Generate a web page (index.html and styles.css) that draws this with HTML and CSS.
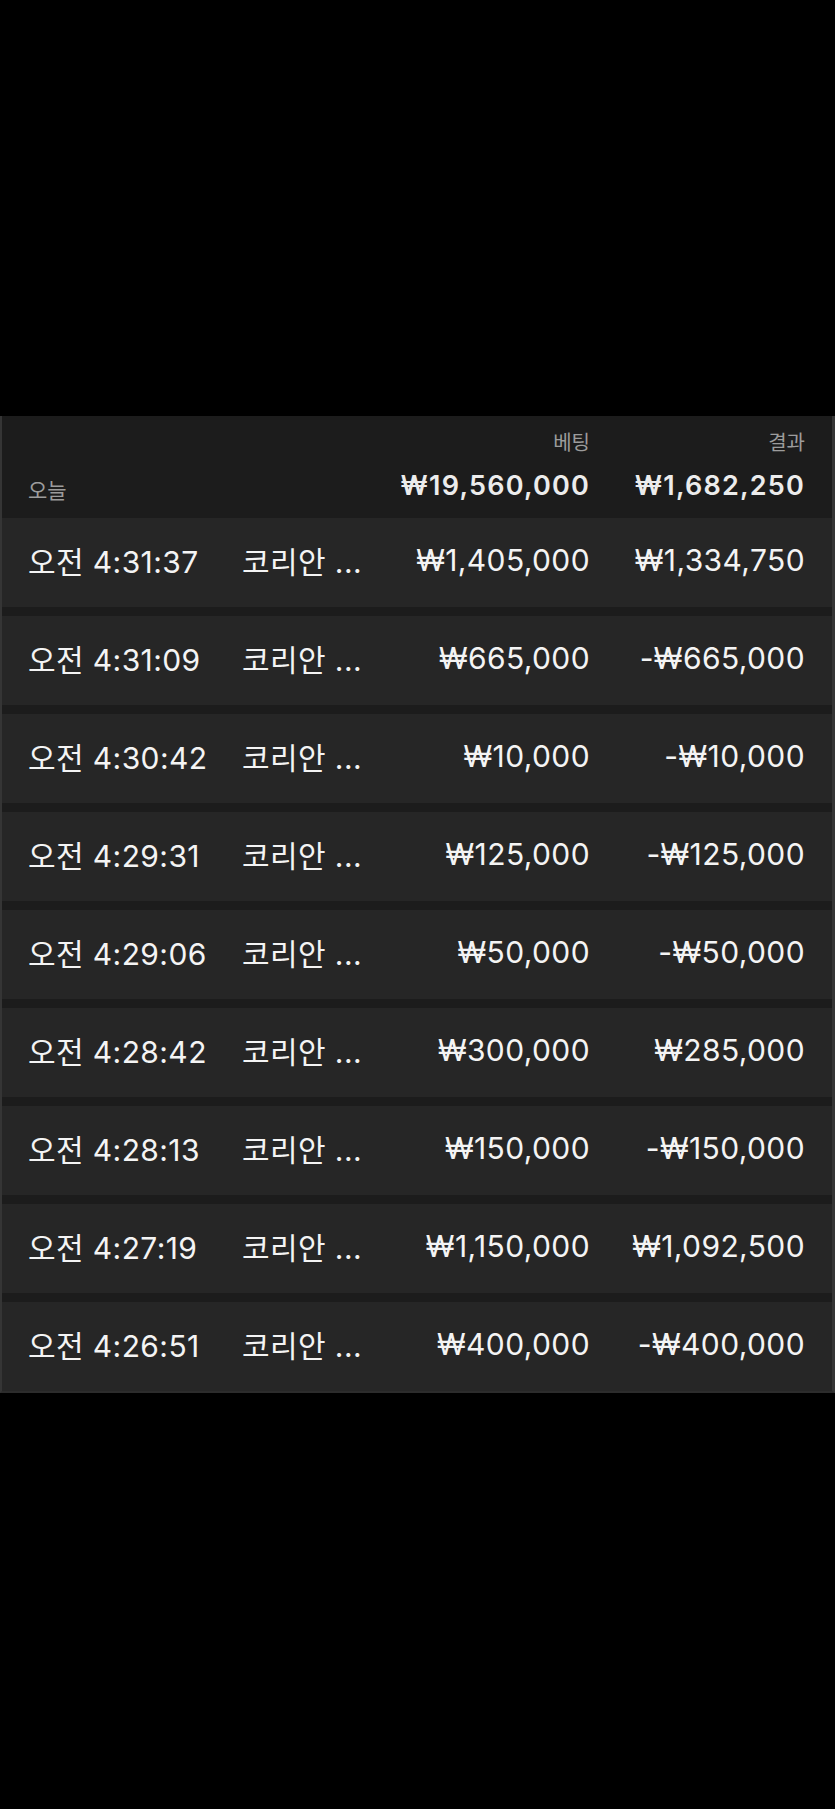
FILE: index.html
```html
<!DOCTYPE html>
<html lang="ko">
<head>
    <meta charset="UTF-8">
    <title>베팅 내역</title>
    <link rel="stylesheet" href="styles.css">
</head>
<body>

<div class="page">
    <div class="list">

        <!--합계-->
        <div class="head">
            <span class="label bet-col">베팅</span>
            <span class="label res-col">결과</span>
            <span class="today">오늘</span>
            <span class="total bet-col">₩19,560,000</span>
            <span class="total res-col">₩1,682,250</span>
        </div>

        <!--내역-->
        <div class="row"><span>오전 4:31:37</span><span>코리안 ...</span><span class="num">₩1,405,000</span><span class="num">₩1,334,750</span></div>
        <div class="row"><span>오전 4:31:09</span><span>코리안 ...</span><span class="num">₩665,000</span><span class="num">-₩665,000</span></div>
        <div class="row"><span>오전 4:30:42</span><span>코리안 ...</span><span class="num">₩10,000</span><span class="num">-₩10,000</span></div>
        <div class="row"><span>오전 4:29:31</span><span>코리안 ...</span><span class="num">₩125,000</span><span class="num">-₩125,000</span></div>
        <div class="row"><span>오전 4:29:06</span><span>코리안 ...</span><span class="num">₩50,000</span><span class="num">-₩50,000</span></div>
        <div class="row"><span>오전 4:28:42</span><span>코리안 ...</span><span class="num">₩300,000</span><span class="num">₩285,000</span></div>
        <div class="row"><span>오전 4:28:13</span><span>코리안 ...</span><span class="num">₩150,000</span><span class="num">-₩150,000</span></div>
        <div class="row"><span>오전 4:27:19</span><span>코리안 ...</span><span class="num">₩1,150,000</span><span class="num">₩1,092,500</span></div>
        <div class="row"><span>오전 4:26:51</span><span>코리안 ...</span><span class="num">₩400,000</span><span class="num">-₩400,000</span></div>
    </div>
</div>

</body>
</html>
```

FILE: styles.css
```css
* {
margin: 0;
padding: 0;
box-sizing: border-box;
}

body {
background-color: #000;
font-family: "Inter", "Noto Sans CJK KR", sans-serif;
color: #f4f4f4;
}

/*위아래 검은 여백*/
.page {
padding: 416px 0 416px;
}

.list {
display: flex;
flex-direction: column;
gap: 9px;
background-color: #1c1c1c;
border-left: 2px solid #353535;
border-right: 3px solid #353535;
border-bottom: 2px solid #2c2c2c;
}

.head,
.row {
display: grid;
grid-template-columns: 214px 1fr auto 215px;
padding: 0 27px 0 26px;
}

/*헤더 + 첫 gap = 102px*/
.head {
height: 93px;
padding-top: 14px;
grid-template-rows: 24px 32px;
row-gap: 16px;
align-items: center;
}

.label {
font-family: "Noto Sans CJK KR", sans-serif;
font-size: 20px;
line-height: 24px;
color: #9c9c9c;
text-align: right;
grid-row: 1;
}

.bet-col {
grid-column: 3;
}

.res-col {
grid-column: 4;
}

.today {
grid-row: 2;
grid-column: 1;
align-self: end;
font-family: "Noto Sans CJK KR", sans-serif;
font-size: 21px;
line-height: 26px;
color: #9c9c9c;
}

.total {
grid-row: 2;
font-size: 27px;
line-height: 32px;
font-weight: 600;
letter-spacing: 1.2px;
text-align: right;
color: #ececec;
}

.row {
height: 89px;
padding-bottom: 5px;
align-items: center;
background-color: #262626;
font-size: 30px;
letter-spacing: 0.4px;
}

.row .num {
text-align: right;
}
```
